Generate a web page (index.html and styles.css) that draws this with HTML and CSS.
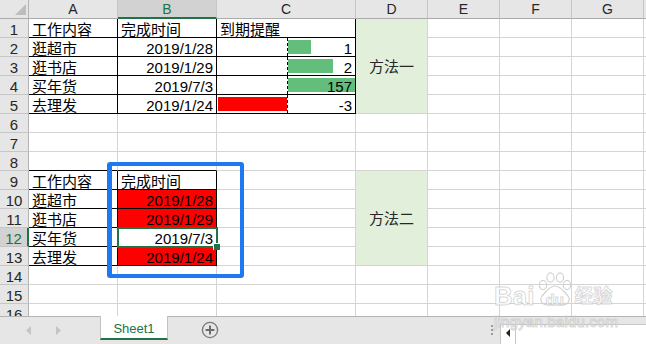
FILE: index.html
```html
<!DOCTYPE html>
<html lang="zh-CN">
<head>
<meta charset="utf-8">
<title>Sheet1</title>
<link rel="stylesheet" href="styles.css">
</head>
<body class="page">
<div class="app">
  <div class="sheet">
    <!-- column headers -->
    <div class="corner"><svg width="29" height="19" viewBox="0 0 29 19"><polygon points="26,4 26,15 15,15" fill="#bdbdbd"/></svg></div>
    <div class="ch">A</div>
    <div class="ch ch-sel">B</div>
    <div class="ch">C</div>
    <div class="ch">D</div>
    <div class="ch">E</div>
    <div class="ch">F</div>
    <div class="ch">G</div>
    <div class="ch ch-end"></div>

    <!-- row 1 -->
    <div class="rh">1</div>
    <div class="c tb">工作内容</div>
    <div class="c tb">完成时间</div>
    <div class="c tb">到期提醒</div>
    <div class="c method">方法一</div>
    <div class="c"></div><div class="c"></div><div class="c"></div><div class="c end"></div>

    <!-- row 2 -->
    <div class="rh">2</div>
    <div class="c tb">逛超市</div>
    <div class="c tb num">2019/1/28</div>
    <div class="c tb num bar-cell"><i class="bar pos" style="width:23px"></i><span class="val">1</span></div>
    <div class="c"></div><div class="c"></div><div class="c"></div><div class="c end"></div>

    <!-- row 3 -->
    <div class="rh">3</div>
    <div class="c tb">逛书店</div>
    <div class="c tb num">2019/1/29</div>
    <div class="c tb num bar-cell"><i class="bar pos" style="width:45px"></i><span class="val">2</span></div>
    <div class="c"></div><div class="c"></div><div class="c"></div><div class="c end"></div>

    <!-- row 4 -->
    <div class="rh">4</div>
    <div class="c tb">买年货</div>
    <div class="c tb num">2019/7/3</div>
    <div class="c tb num bar-cell"><i class="bar pos" style="width:67px"></i><span class="val">157</span></div>
    <div class="c"></div><div class="c"></div><div class="c"></div><div class="c end"></div>

    <!-- row 5 -->
    <div class="rh">5</div>
    <div class="c tb">去理发</div>
    <div class="c tb num">2019/1/24</div>
    <div class="c tb num bar-cell"><i class="bar neg" style="width:69px"></i><span class="val">-3</span></div>
    <div class="c"></div><div class="c"></div><div class="c"></div><div class="c end"></div>

    <!-- row 6 -->
    <div class="rh">6</div>
    <div class="c"></div><div class="c"></div><div class="c"></div><div class="c"></div><div class="c"></div><div class="c"></div><div class="c"></div><div class="c end"></div>

    <!-- row 7 -->
    <div class="rh">7</div>
    <div class="c"></div><div class="c"></div><div class="c"></div><div class="c"></div><div class="c"></div><div class="c"></div><div class="c"></div><div class="c end"></div>

    <!-- row 8 -->
    <div class="rh">8</div>
    <div class="c tt"></div><div class="c tt"></div><div class="c"></div><div class="c"></div><div class="c"></div><div class="c"></div><div class="c"></div><div class="c end"></div>

    <!-- row 9 -->
    <div class="rh">9</div>
    <div class="c tb">工作内容</div>
    <div class="c tb">完成时间</div>
    <div class="c"></div>
    <div class="c method">方法二</div>
    <div class="c"></div><div class="c"></div><div class="c"></div><div class="c end"></div>

    <!-- row 10 -->
    <div class="rh">10</div>
    <div class="c tb">逛超市</div>
    <div class="c tb num red">2019/1/28</div>
    <div class="c"></div>
    <div class="c"></div><div class="c"></div><div class="c"></div><div class="c end"></div>

    <!-- row 11 -->
    <div class="rh">11</div>
    <div class="c tb">逛书店</div>
    <div class="c tb num red">2019/1/29</div>
    <div class="c"></div>
    <div class="c"></div><div class="c"></div><div class="c"></div><div class="c end"></div>

    <!-- row 12 -->
    <div class="rh rh-sel">12</div>
    <div class="c tb">买年货</div>
    <div class="c tb num sel">2019/7/3</div>
    <div class="c"></div>
    <div class="c"></div><div class="c"></div><div class="c"></div><div class="c end"></div>

    <!-- row 13 -->
    <div class="rh">13</div>
    <div class="c tb">去理发</div>
    <div class="c tb num red">2019/1/24</div>
    <div class="c"></div>
    <div class="c"></div><div class="c"></div><div class="c"></div><div class="c end"></div>

    <!-- row 14 -->
    <div class="rh">14</div>
    <div class="c"></div><div class="c"></div><div class="c"></div><div class="c"></div><div class="c"></div><div class="c"></div><div class="c"></div><div class="c end"></div>

    <!-- row 15 -->
    <div class="rh">15</div>
    <div class="c"></div><div class="c"></div><div class="c"></div><div class="c"></div><div class="c"></div><div class="c"></div><div class="c"></div><div class="c end"></div>

    <!-- row 16 -->
    <div class="rh">16</div>
    <div class="c"></div><div class="c"></div><div class="c"></div><div class="c"></div><div class="c"></div><div class="c"></div><div class="c"></div><div class="c end"></div>

    <!-- highlight frame drawn around the second table's date column -->
    <div class="frame"></div>
  </div>

  <div class="tabbar">
    <div class="nav">
      <svg class="nav-arrow" width="6" height="9" viewBox="0 0 6 9"><polygon points="5,0 5,9 0,4.5" fill="#c4c4c4"/></svg>
      <svg class="nav-arrow" width="6" height="9" viewBox="0 0 6 9"><polygon points="0,0 0,9 5,4.5" fill="#c4c4c4"/></svg>
    </div>
    <div class="tab">Sheet1</div>
    <svg class="add" width="18" height="18" viewBox="0 0 18 18">
      <circle cx="9" cy="9" r="7.6" fill="none" stroke="#7b7b7b" stroke-width="1.4"/>
      <rect x="4.6" y="8" width="8.8" height="2" fill="#6b6b6b"/>
      <rect x="8" y="4.6" width="2" height="8.8" fill="#6b6b6b"/>
    </svg>
    <div class="grip"><i></i><i></i><i></i></div>
    <div class="hscroll">
      <div class="hs-btn"><svg width="5" height="8" viewBox="0 0 5 8"><polygon points="4,0 4,8 0,4" fill="#222"/></svg></div>
      <div class="hs-track"></div>
    </div>
  </div>

  <div class="watermark">
    <div class="wm-logo">
      <span class="wm-bai">Bai</span>
      <span class="wm-paw">
        <svg width="34" height="34" viewBox="0 0 34 34">
          <g fill="none" stroke="#d2d2d2" stroke-width="1.2">
            <ellipse cx="5" cy="13" rx="3.6" ry="4.6"/>
            <ellipse cx="12.5" cy="5.5" rx="3.6" ry="4.6"/>
            <ellipse cx="22" cy="5.5" rx="3.6" ry="4.6"/>
            <ellipse cx="29" cy="13" rx="3.6" ry="4.6"/>
            <path d="M17 14 C11 14 8 20 4 24 C1 28 4 33 10 33 L24 33 C30 33 33 28 30 24 C26 20 23 14 17 14 Z"/>
          </g>
        </svg>
        <span class="wm-du">du</span>
      </span>
      <span class="wm-jy">经验</span>
    </div>
    <div class="wm-url">jingyan.baidu.com</div>
  </div>
</div>
</body>
</html>
```

FILE: styles.css
```css
* {
  box-sizing: border-box;
}

.page {
  margin: 0;
  width: 646px;
  height: 344px;
  overflow: hidden;
  background: #ffffff;
  font-family: "Liberation Sans", "Noto Sans CJK SC", sans-serif;
  color: #000;
}

.app {
  position: relative;
  width: 646px;
  height: 344px;
}

/* ---------- worksheet grid ---------- */
.sheet {
  position: relative;
  display: grid;
  grid-template-columns: 29px 89px 99px 139px 72px 72px 72px 72px 1fr;
  grid-auto-rows: 19px;
  height: 316px;
  overflow: hidden;
}

.corner {
  background: #e6e6e6;
  border-right: 1px solid #b4b4b4;
  border-bottom: 1px solid #ababab;
}

.corner svg {
  display: block;
}

.ch {
  display: flex;
  align-items: flex-end;
  justify-content: center;
  background: #e6e6e6;
  border-right: 1px solid #c6c6c6;
  border-bottom: 1px solid #ababab;
  font-size: 14px;
  line-height: 15px;
  padding-bottom: 1px;
  color: #262626;
}

.ch-sel {
  background: #d2d2d2;
  color: #217346;
  border-bottom: 2px solid #217346;
  padding-bottom: 0;
}

.ch-end {
  border-right: none;
}

.rh {
  display: flex;
  align-items: flex-end;
  justify-content: center;
  background: #e6e6e6;
  border-right: 1px solid #b4b4b4;
  border-bottom: 1px solid #c6c6c6;
  font-size: 15px;
  line-height: 15px;
  color: #262626;
}

.rh-sel {
  background: #d2d2d2;
  color: #217346;
  border-right: 2px solid #217346;
}

.c {
  position: relative;
  display: flex;
  align-items: flex-end;
  padding: 0 3px;
  border-right: 1px solid #d4d4d4;
  border-bottom: 1px solid #d4d4d4;
  font-size: 15px;
  line-height: 15px;
  white-space: nowrap;
  min-width: 0;
}

.end {
  border-right: none;
}

/* table borders */
.tb {
  border-right-color: #000;
  border-bottom-color: #000;
}

.tt {
  border-bottom-color: #000;
}

.num {
  justify-content: flex-end;
}

.red {
  background: #ff0000;
}

.method {
  grid-row: span 5;
  align-items: center;
  justify-content: center;
  background: #e2efda;
  color: #262626;
}

/* active cell */
.sel {
  z-index: 2;
  outline: 2px solid #217346;
  outline-offset: -1px;
}

.sel::after {
  content: "";
  position: absolute;
  right: -4px;
  bottom: -4px;
  width: 6px;
  height: 6px;
  background: #217346;
  border-left: 1px solid #fff;
  border-top: 1px solid #fff;
}

/* data bars */
.bar-cell::before {
  content: "";
  position: absolute;
  left: 70px;
  top: 0;
  bottom: 0;
  border-left: 1px dashed #000;
}

.bar {
  position: absolute;
  top: 2px;
  bottom: 2px;
}

.bar.pos {
  left: 71px;
  background: #63be7b;
}

.bar.neg {
  left: 1px;
  background: #ff0000;
}

.val {
  position: relative;
}

/* annotation frame */
.frame {
  position: absolute;
  left: 107px;
  top: 162px;
  width: 137px;
  height: 116px;
  border: 4px solid #1e78f0;
  border-left-width: 5px;
  border-radius: 3px;
}

/* ---------- sheet tab bar ---------- */
.tabbar {
  display: flex;
  align-items: flex-start;
  height: 28px;
  background: #e6e6e6;
  border-top: 1px solid #b4b4b4;
}

.nav {
  width: 100px;
  height: 27px;
  display: flex;
  align-items: center;
  gap: 24px;
  padding-left: 26px;
}

.nav-arrow {
  display: block;
}

.tab {
  width: 68px;
  height: 24px;
  margin-top: -1px;
  display: flex;
  align-items: center;
  justify-content: center;
  background: #ffffff;
  border-left: 1px solid #c2c2c2;
  border-right: 1px solid #c2c2c2;
  border-bottom: 2px solid #217346;
  color: #217346;
  font-size: 13px;
  padding-top: 2px;
}

.add {
  display: block;
  margin-left: 33px;
  margin-top: 4px;
}

.grip {
  margin-left: auto;
  margin-top: 8px;
  width: 16px;
  display: flex;
  flex-direction: column;
  align-items: center;
  gap: 2px;
}

.grip i {
  display: block;
  width: 2px;
  height: 2px;
  background: #9a9a9a;
}

.hscroll {
  width: 146px;
  height: 21px;
  margin-top: 7px;
  display: flex;
  border-top: 1px solid #c6c6c6;
  border-left: 1px solid #c6c6c6;
  background: #ffffff;
}

.hs-btn {
  width: 15px;
  display: flex;
  align-items: center;
  justify-content: center;
  border-right: 1px solid #c6c6c6;
  padding-bottom: 4px;
}

.hs-btn svg {
  display: block;
}

.hs-track {
  flex: 1;
}

/* ---------- faint site watermark ---------- */
.watermark {
  position: absolute;
  left: 494px;
  top: 272px;
  pointer-events: none;
  color: rgba(255, 255, 255, 0.75);
  -webkit-text-stroke: 1px rgba(170, 170, 170, 0.45);
  font-family: "Liberation Sans", "Noto Sans CJK SC", sans-serif;
}

.wm-logo {
  display: flex;
  align-items: flex-end;
  height: 36px;
}

.wm-bai {
  font-size: 26px;
  line-height: 24px;
  font-weight: bold;
}

.wm-paw {
  position: relative;
  width: 36px;
  height: 36px;
  margin-left: 4px;
}

.wm-paw svg {
  position: absolute;
  left: 0;
  top: 0;
}

.wm-du {
  position: absolute;
  left: 7px;
  top: 20px;
  font-size: 15px;
  line-height: 15px;
  font-weight: bold;
}

.wm-jy {
  font-size: 19px;
  line-height: 22px;
  font-weight: bold;
  margin-left: 0;
}

.wm-url {
  margin-top: 6px;
  font-size: 15px;
  line-height: 15px;
  letter-spacing: 0.2px;
}
```
